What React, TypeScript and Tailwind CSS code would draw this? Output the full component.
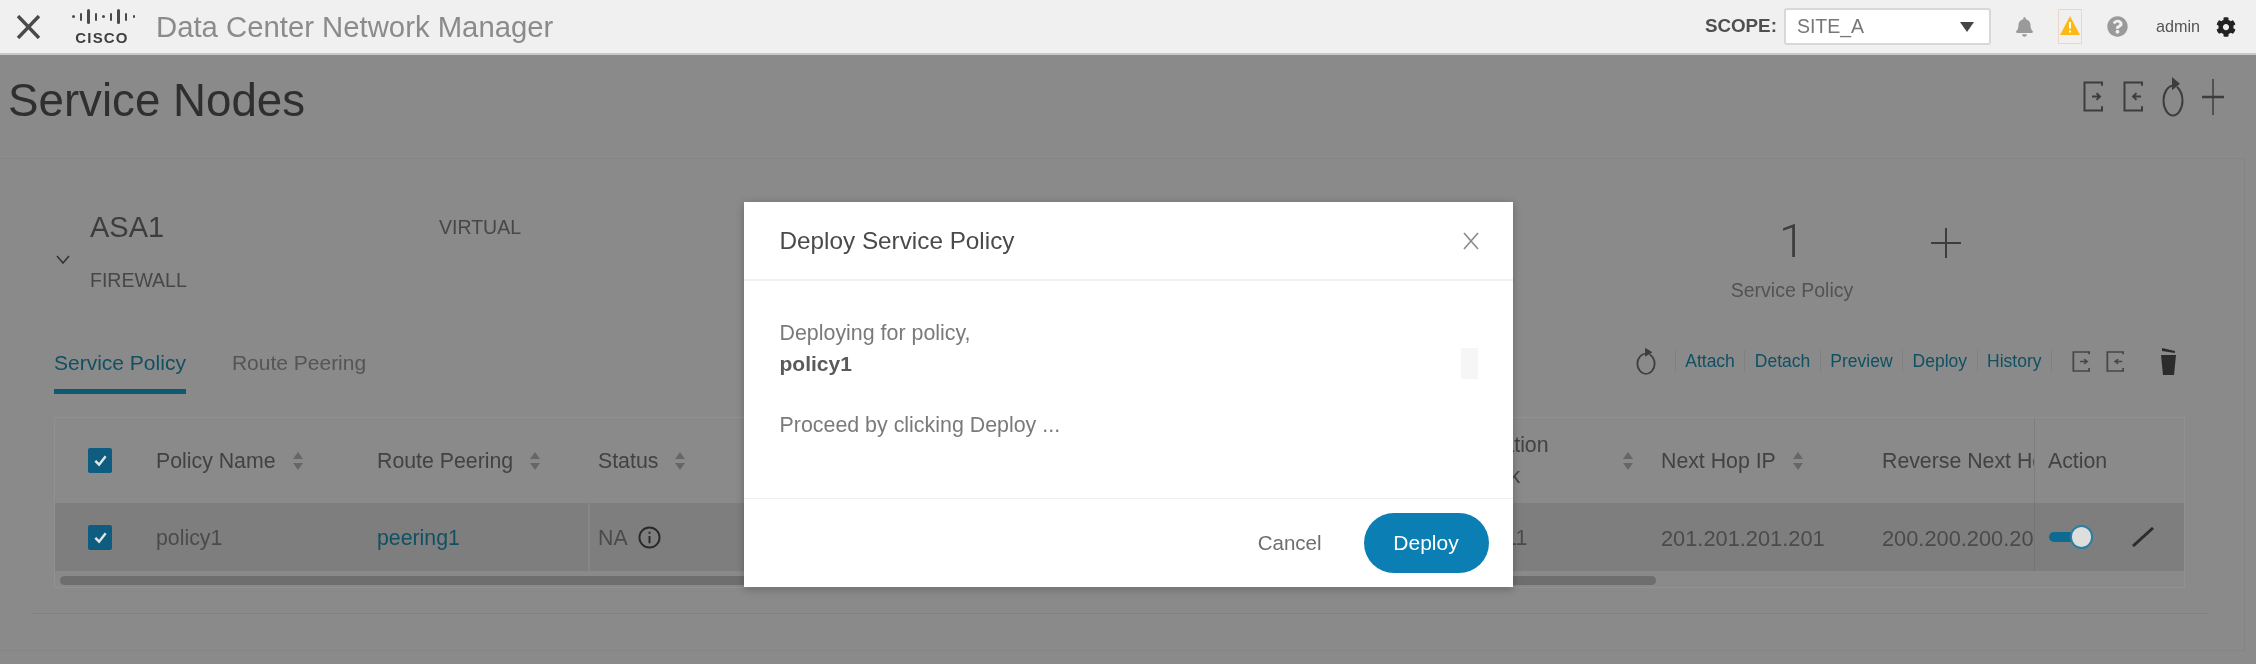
import { FaBell, FaCog, FaQuestionCircle } from 'react-icons/fa';

const ciscoBars = [3, 8, 15, 8, 3, 8, 15, 8, 3];
const toolbarLinks = ['Attach', 'Detach', 'Preview', 'Deploy', 'History'];

function Separator() {
  return <span className="h-[22px] w-px bg-[#d6d6d6]" />;
}

function TransferIcon({ direction, className }: { direction: 'out' | 'in'; className: string }) {
  return (
    <svg viewBox="0 0 20 32" preserveAspectRatio="none" className={className} fill="none" stroke="currentColor" strokeWidth="2">
      <path d="M19 5V1.5H1.5V30.5H19V26" />
      {direction === 'out' ? (
        <path d="M9 16H17M13.5 12.5L17 16L13.5 19.5" />
      ) : (
        <path d="M18 16H10M13.5 12.5L10 16L13.5 19.5" />
      )}
    </svg>
  );
}

function RefreshIcon({ className }: { className: string }) {
  return (
    <svg viewBox="0 0 22 40" preserveAspectRatio="none" className={className} fill="none" stroke="currentColor" strokeWidth="2">
      <path d="M15 10.5C18.5 14 20.5 18.5 20.5 24C20.5 32 16 38.5 11 38.5C6 38.5 1.5 32 1.5 24C1.5 16 6 9.5 11 9.5" />
      <path d="M10 1L18 7.5L10 14Z" fill="currentColor" stroke="none" />
    </svg>
  );
}

function PlusIcon({ className }: { className: string }) {
  return (
    <svg viewBox="0 0 30 30" preserveAspectRatio="none" className={className} fill="none" stroke="currentColor" strokeWidth="2">
      <path d="M15 0V30M0 15H30" />
    </svg>
  );
}

function SortIcon() {
  return (
    <svg viewBox="0 0 10 18" className="ml-[17px] h-[18px] w-[10px] shrink-0 text-[#ababab]" fill="currentColor">
      <path d="M5 0L10 7H0Z" />
      <path d="M5 18L10 11H0Z" />
    </svg>
  );
}

function Checkbox() {
  return (
    <span className="relative z-20 flex h-[25px] w-[24px] items-center justify-center rounded-[2px] bg-[#0e5c80]">
      <svg viewBox="0 0 16 16" className="h-[15px] w-[15px]" fill="none" stroke="#e4e4e4" strokeWidth="2.6">
        <path d="M2.5 8.5L6.5 12.5L13.5 3.5" />
      </svg>
    </span>
  );
}

function HeaderCell({ label, className }: { label: string; className: string }) {
  return (
    <div className={`flex items-center ${className}`}>
      <span className="mt-[2px] whitespace-nowrap">{label}</span>
      <SortIcon />
    </div>
  );
}

export default function App() {
  return (
    <div className="relative h-[664px] w-[2256px] overflow-hidden bg-[#e6e6e6] font-['Liberation_Sans',sans-serif] blur-[0.5px]">
      {/* top bar */}
      <header className="relative z-20 flex h-[55px] items-center border-b-2 border-[#c9c9c9] bg-[#f0f0f0]">
        <svg viewBox="0 0 25 24" className="ml-[16px] h-[24px] w-[25px] text-[#4a4a4a]" fill="none" stroke="currentColor" strokeWidth="3.4">
          <path d="M2 1L23 23M23 1L2 23" />
        </svg>
        <div className="ml-[31px] flex w-[63px] flex-col items-center">
          <div className="flex h-[16px] w-full items-center justify-between">
            {ciscoBars.map((height, index) => (
              <span key={index} className="w-[2.5px] rounded-full bg-[#4a4a4a]" style={{ height }} />
            ))}
          </div>
          <span className="mt-[5px] -ml-[3px] text-[15px] leading-[15px] font-bold tracking-[1.2px] text-[#3f3f3f]">CISCO</span>
        </div>
        <h2 className="ml-[21px] text-[29.3px] leading-none whitespace-nowrap text-[#8b8b8b]">Data Center Network Manager</h2>

        <span className="ml-auto text-[18.8px] font-bold text-[#4f4f4f]">SCOPE:</span>
        <div className="ml-[7px] flex h-[37px] w-[207px] items-center justify-between rounded-[3px] border-2 border-[#d8d8d8] bg-white pr-[15px] pl-[11px] text-[19.5px] text-[#777]">
          SITE_A
          <svg viewBox="0 0 14 10" className="h-[10px] w-[14px] text-[#444]" fill="currentColor">
            <path d="M0 0H14L7 10Z" />
          </svg>
        </div>
        <FaBell className="ml-[25px] h-[20px] w-[17px] text-[#9a9a9a]" />
        <div className="ml-[25px] flex h-[35px] w-[24px] items-start justify-center border border-[#ecd6c8] pt-[6px]">
          <svg viewBox="0 0 20 19" className="h-[19px] w-[20px]">
            <path d="M10 0L20 19H0Z" fill="#fdb913" />
            <path d="M10 6V12.5M10 14.5V16.5" stroke="white" strokeWidth="2" />
          </svg>
        </div>
        <FaQuestionCircle className="ml-[25px] h-[21px] w-[21px] text-[#9a9a9a]" />
        <span className="ml-[28px] text-[16.2px] text-[#555]">admin</span>
        <FaCog className="ml-[16px] h-[20px] w-[20px] text-[#222]" />
        <span className="w-[20px]" />
      </header>

      <main>
        <div className="flex h-[103px] items-start pt-[21px] pr-[32px] pl-[8px]">
          <h1 className="text-[45.7px] leading-[50px] text-[#4f4f4f]">Service Nodes</h1>
          <div className="ml-auto flex items-center text-[#666]">
            <TransferIcon direction="out" className="h-[31px] w-[20px]" />
            <TransferIcon direction="in" className="ml-[20px] h-[31px] w-[20px]" />
            <RefreshIcon className="ml-[19px] h-[41px] w-[22px]" />
            <PlusIcon className="ml-[18px] h-[36px] w-[22px]" />
          </div>
        </div>

        {/* service node card */}
        <section className="h-[493px] w-[2245px] border-t border-r border-b border-[#dcdcdc]">
          <div className="mt-[50px] flex h-[92px] pl-[56px]">
            <svg viewBox="0 0 14 9" className="mt-[46px] mr-[20px] h-[9px] w-[14px] text-[#555]" fill="none" stroke="currentColor" strokeWidth="1.6">
              <path d="M1 1L7 8L13 1" />
            </svg>
            <div className="w-[349px]">
              <p className="text-[29px] leading-[36px] text-[#666]">ASA1</p>
              <p className="mt-[23px] text-[19.5px] leading-[24px] text-[#777]">FIREWALL</p>
            </div>
            <p className="text-[19.5px] leading-[36px] text-[#777]">VIRTUAL</p>
            <div className="ml-[1171px] w-[200px] text-center">
              <p className="mt-[8px] font-['Roboto',sans-serif] text-[47px] leading-[48px] font-light text-[#666]">1</p>
              <p className="mt-[13px] text-[19.5px] leading-[24px] text-[#8a8a8a]">Service Policy</p>
            </div>
            <PlusIcon className="mt-[19px] ml-[39px] h-[30px] w-[30px] text-[#666]" />
          </div>

          <div className="mt-[45px] flex items-start pr-[67px] pl-[54px]">
            <div className="flex text-[21px] leading-[34px]">
              <div className="border-b-[5px] border-[#1a96c0] pb-[9px] text-[#1d86a4]">Service Policy</div>
              <div className="ml-[46px] text-[#8e8e8e]">Route Peering</div>
            </div>
            <div className="ml-auto flex h-[30px] items-center gap-[9.5px] text-[17.5px] text-[#1d86a4]">
              <RefreshIcon className="mr-[9px] h-[28px] w-[20px] text-[#666]" />
              <Separator />
              {toolbarLinks.map((link) => (
                <div key={link} className="contents">
                  <span>{link}</span>
                  <Separator />
                </div>
              ))}
              <TransferIcon direction="out" className="ml-[10px] h-[21px] w-[18px] text-[#777]" />
              <TransferIcon direction="in" className="ml-[7px] h-[21px] w-[18px] text-[#777]" />
              <span className="ml-[9px]">
                <Separator />
              </span>
              <svg viewBox="0 0 17 27" className="ml-[8px] h-[27px] w-[17px] text-[#4a4a4a]" fill="currentColor">
                <path d="M2 0L15 3V5L2 3Z" />
                <path d="M1 7H16L14 27H3Z" />
              </svg>
            </div>
          </div>

          {/* policy table */}
          <div className="mt-[23px] ml-[54px] h-[171px] w-[2131px] border border-[#f2f2f2] text-[21.3px] text-[#6e6e6e]">
            <div className="flex h-[85px] items-center">
              <div className="w-[101px] pl-[33px]">
                <Checkbox />
              </div>
              <HeaderCell label="Policy Name" className="w-[221px]" />
              <HeaderCell label="Route Peering" className="w-[211px]" />
              <HeaderCell label="Status" className="w-[854px] pl-[10px]" />
              <div className="flex w-[219px] items-center">
                <span className="w-[181px] leading-[31px]">
                  Destination
                  <br />
                  Network
                </span>
                <span className="-ml-[17px]">
                  <SortIcon />
                </span>
              </div>
              <HeaderCell label="Next Hop IP" className="w-[221px]" />
              <div className="mt-[2px] w-[152px] overflow-hidden whitespace-nowrap">Reverse Next Hop IP</div>
              <div className="flex h-full flex-1 items-center border-l border-[#d2d2d2] pt-[2px] pl-[13px]">Action</div>
            </div>
            <div className="flex h-[68px] items-center bg-[#d3d3d3]">
              <div className="w-[101px] pl-[33px]">
                <Checkbox />
              </div>
              <div className="w-[221px] pt-[4px] text-[#7c7c7c]">policy1</div>
              <div className="w-[211px] pt-[4px] text-[#1d86a4]">peering1</div>
              <div className="flex h-full w-[854px] items-center border-l-2 border-[#e0e0e0] pl-[8px] text-[#7c7c7c]">
                <span className="pt-[4px]">NA</span>
                <svg viewBox="0 0 24 24" className="ml-[10px] h-[23px] w-[23px] text-[#444]" fill="none" stroke="currentColor" strokeWidth="2">
                  <circle cx="12" cy="12" r="10.5" />
                  <path d="M12 10.5V18M12 6V8" />
                </svg>
              </div>
              <div className="w-[219px] pt-[4px] pl-[4px] text-[#7c7c7c]">10.10.11</div>
              <div className="w-[221px] pt-[4px] text-[21.8px] text-[#7c7c7c]">201.201.201.201</div>
              <div className="w-[152px] overflow-hidden pt-[4px] text-[21.8px] whitespace-nowrap text-[#7c7c7c]">200.200.200.200</div>
              <div className="flex h-full flex-1 items-center border-l border-[#c4c4c4] pl-[14px]">
                <span className="relative z-20 flex h-[24px] w-[44px] items-center">
                  <span className="h-[10px] w-[34px] rounded-l-full bg-[#0d6a90]" />
                  <span className="-ml-[10px] h-[24px] w-[24px] rounded-full border-2 border-[#2b7f9f] bg-[#dedede]" />
                </span>
                <svg viewBox="0 0 22 20" className="ml-[39px] h-[20px] w-[22px] text-[#4a4a4a]" fill="none" stroke="currentColor" strokeWidth="3">
                  <path d="M1 19L21 1" />
                </svg>
              </div>
            </div>
            <div className="h-[16px] pt-[5px] pl-[5px]">
              <div className="h-[9px] w-[1596px] rounded-full bg-[#b7b7b7]" />
            </div>
          </div>
          <div className="mt-[25px] ml-[32px] h-px w-[2176px] bg-[#d8d8d8]" />
        </section>
      </main>

      {/* deploy dialog, with its backdrop */}
      <div className="absolute inset-x-0 top-[55px] bottom-0 z-10 flex justify-center bg-black/40">
        <div className="mt-[147px] flex h-[385px] w-[769px] flex-col bg-white shadow-[0_2px_8px_rgba(0,0,0,0.25)]">
          <div className="flex h-[79px] shrink-0 items-center justify-between border-b-2 border-[#efefef] pr-[34px] pl-[36px]">
            <h3 className="pt-[2px] text-[24.3px] text-[#4a4a4a]">Deploy Service Policy</h3>
            <svg viewBox="0 0 16 18" className="h-[18px] w-[16px] text-[#8a8a8a]" fill="none" stroke="currentColor" strokeWidth="1.6">
              <path d="M1 1L15 17M15 1L1 17" />
            </svg>
          </div>
          <div className="flex flex-1 justify-between pr-[35px] pl-[36px]">
            <div className="pt-[37px] text-[21.4px] text-[#7a7a7a]">
              <p className="leading-[30px]">Deploying for policy,</p>
              <p className="text-[21px] leading-[32px] font-bold text-[#5a5a5a]">policy1</p>
              <p className="mt-[30px] leading-[30px]">Proceed by clicking Deploy ...</p>
            </div>
            <div className="mt-[67px] h-[31px] w-[17px] bg-[#f6f6f6]" />
          </div>
          <div className="flex h-[89px] shrink-0 items-center justify-end border-t border-[#efefef] pr-[24px]">
            <span className="mr-[42px] text-[20.5px] text-[#6e6e6e]">Cancel</span>
            <button className="h-[60px] w-[125px] rounded-full bg-[#0b7fb3] text-[21px] text-white">Deploy</button>
          </div>
        </div>
      </div>
    </div>
  );
}
